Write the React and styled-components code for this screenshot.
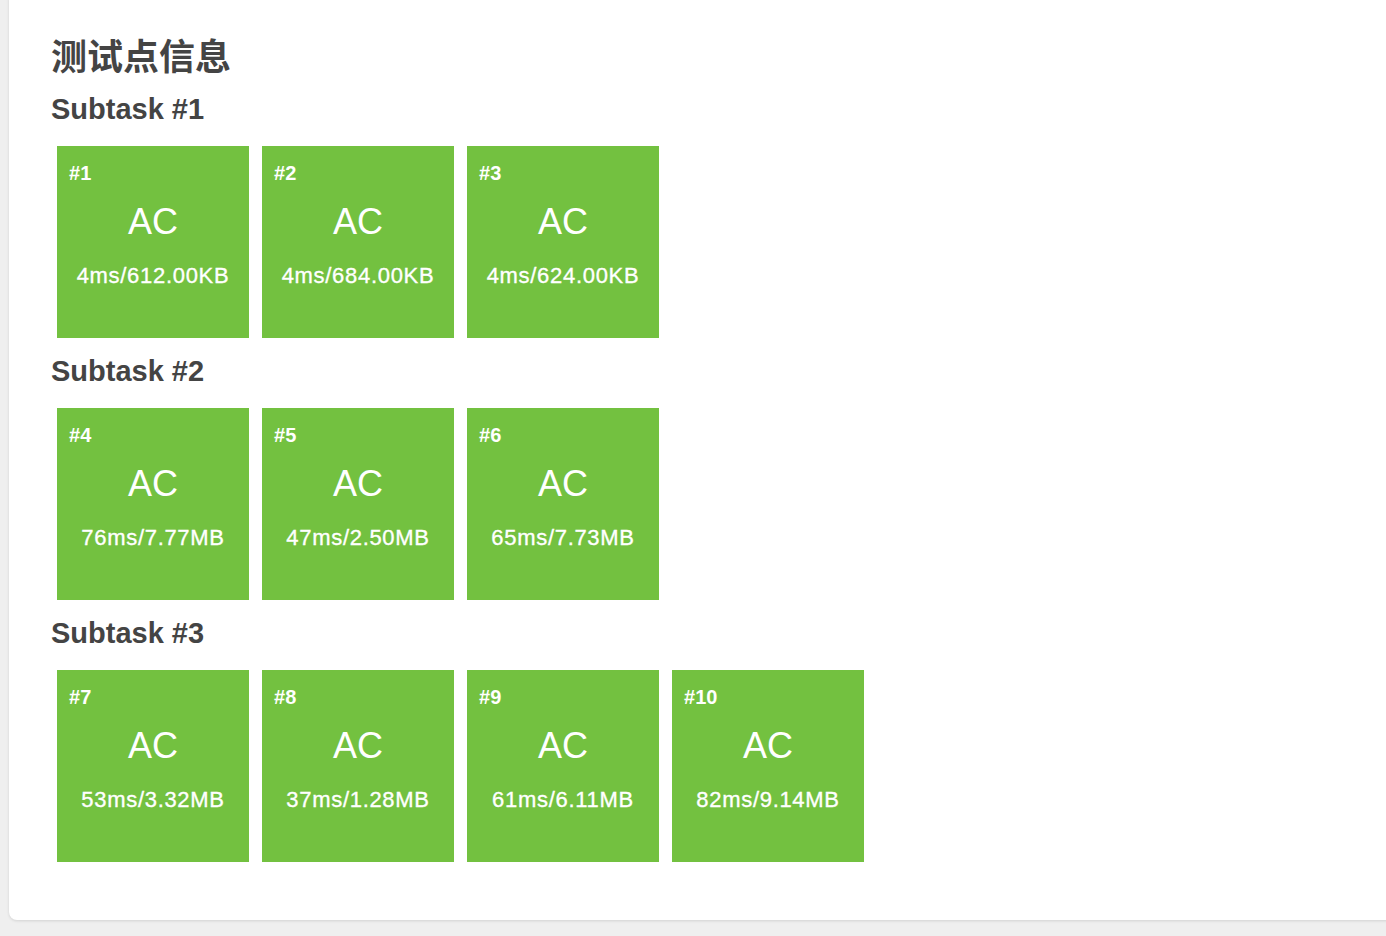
import styled, { createGlobalStyle } from "styled-components";

const GlobalStyle = createGlobalStyle`
  html, body {
    margin: 0;
    padding: 0;
    background: #efefef;
    overflow: hidden;
  }
  body {
    font-family: "Liberation Sans", "Noto Sans CJK SC", sans-serif;
  }
`;

const subtasks = [
  {
    name: "Subtask #1",
    cases: [
      { id: 1, info: "4ms/612.00KB" },
      { id: 2, info: "4ms/684.00KB" },
      { id: 3, info: "4ms/624.00KB" },
    ],
  },
  {
    name: "Subtask #2",
    cases: [
      { id: 4, info: "76ms/7.77MB" },
      { id: 5, info: "47ms/2.50MB" },
      { id: 6, info: "65ms/7.73MB" },
    ],
  },
  {
    name: "Subtask #3",
    cases: [
      { id: 7, info: "53ms/3.32MB" },
      { id: 8, info: "37ms/1.28MB" },
      { id: 9, info: "61ms/6.11MB" },
      { id: 10, info: "82ms/9.14MB" },
    ],
  },
];

const App = () => {
  return (
    <Page>
      <GlobalStyle />
      <Card>
        <Title>测试点信息</Title>
        {subtasks.map((task) => (
          <Section key={task.name}>
            <SubTitle>{task.name}</SubTitle>
            <TileRow>
              {task.cases.map((c) => (
                <Tile key={c.id}>
                  <TileId>#{c.id}</TileId>
                  <TileStatus>AC</TileStatus>
                  <TileInfo>{c.info}</TileInfo>
                </Tile>
              ))}
            </TileRow>
          </Section>
        ))}
      </Card>
    </Page>
  );
};

export default App;

const Page = styled.div`
  padding-left: 9px;
  height: 936px;
`;

const Card = styled.div`
  width: 1420px;
  margin-top: -10px;
  padding: 42px 0 58px 42px;
  box-sizing: border-box;
  background: #fff;
  border-radius: 8px;
  box-shadow: 0 1px 3px rgba(0, 0, 0, 0.12);
  color: #444;
`;

const Title = styled.h1`
  margin: 0;
  font-family: "Noto Sans CJK SC", sans-serif;
  font-size: 36px;
  font-weight: 700;
  line-height: 44px;
  color: #444;
`;

const Section = styled.div`
  margin-top: 15px;
`;

const SubTitle = styled.h3`
  margin: 0 0 19px;
  font-size: 29px;
  font-weight: 700;
  line-height: 36px;
  color: #444;
`;

const TileRow = styled.div`
  display: flex;
  gap: 13px;
  padding-left: 6px;
`;

const Tile = styled.div`
  width: 192px;
  height: 192px;
  background: #73c140;
  color: #fff;
  display: flex;
  flex-direction: column;
  align-items: center;
`;

const TileId = styled.div`
  align-self: flex-start;
  margin: 16px 0 0 12px;
  font-size: 20px;
  font-weight: 700;
  line-height: 22px;
`;

const TileStatus = styled.div`
  margin-top: 16px;
  font-size: 36px;
  line-height: 44px;
`;

const TileInfo = styled.div`
  margin-top: 20px;
  font-size: 22px;
  line-height: 24px;
  letter-spacing: 0.7px;
  -webkit-text-stroke: 0.35px #fff;
`;
